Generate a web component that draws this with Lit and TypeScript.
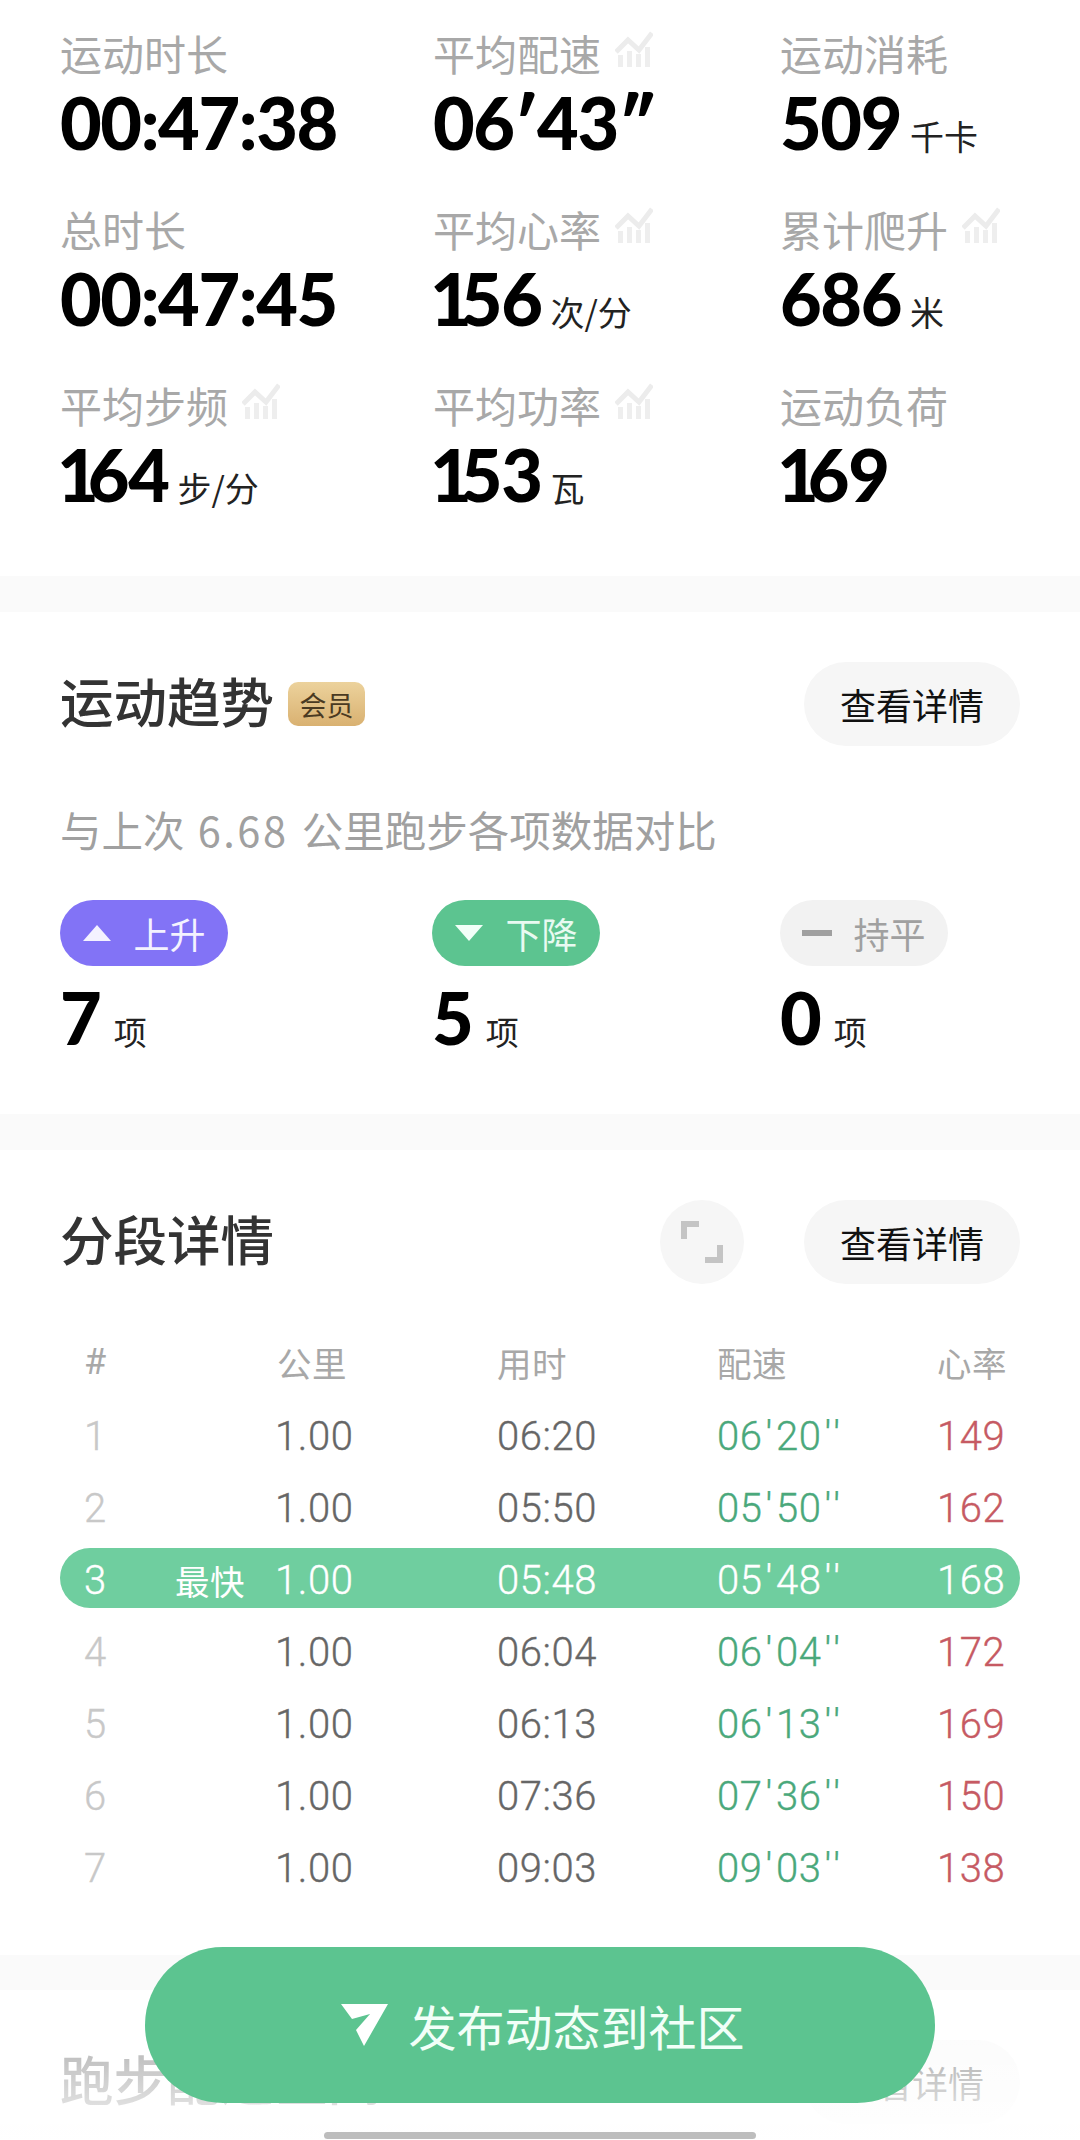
import { LitElement, html, css, svg } from "lit";
import { customElement } from "lit/decorators.js";

const trend = html`<svg class="trend" viewBox="0 0 38 36" aria-hidden="true">
  ${svg`<path d="M1 21 L13 9 L24 19 L37 2" fill="none" stroke="#ececec" stroke-width="5"/>`}
  ${[3, 12, 21, 30].map((x, i) => svg`<rect x="${x}" y="${[24, 20, 23, 16][i]}" width="5" height="${36 - [24, 20, 23, 16][i]}" fill="#eeeeee"/>`)}
</svg>`;

const stats = [
  ["运动时长", "00:47:38", "", false],
  ["平均配速", "06′43″", "", true],
  ["运动消耗", "509", "千卡", false],
  ["总时长", "00:47:45", "", false],
  ["平均心率", "156", "次/分", true],
  ["累计爬升", "686", "米", true],
  ["平均步频", "164", "步/分", true],
  ["平均功率", "153", "瓦", true],
  ["运动负荷", "169", "", false],
] as const;

const rows = [
  ["1", "", "1.00", "06:20", "06'20''", "149"],
  ["2", "", "1.00", "05:50", "05'50''", "162"],
  ["3", "最快", "1.00", "05:48", "05'48''", "168"],
  ["4", "", "1.00", "06:04", "06'04''", "172"],
  ["5", "", "1.00", "06:13", "06'13''", "169"],
  ["6", "", "1.00", "07:36", "07'36''", "150"],
  ["7", "", "1.00", "09:03", "09'03''", "138"],
];

const num = (v: string) =>
  v.startsWith("1")
    ? html`<span class="num narrow"><span class="one">1</span>${v.slice(1)}</span>`
    : html`<span class="num">${v}</span>`;

const pace = (p: string) => {
  const [m, s] = p.split("'");
  return html`${m}<span class="q">'</span>${s}<span class="q2">''</span>`;
};

@customElement("app-root")
export class AppRoot extends LitElement {
  static styles = css`
    :host {
      display: block;
      position: relative;
      width: 1080px;
      height: 2140px;
      overflow: hidden;
      background: #fafafa;
      font-family: "Noto Sans CJK SC", sans-serif;
    }
    .section { background: #fff; padding: 50px 60px 0; }
    .stats {
      display: grid;
      grid-template-columns: 373px 347px 240px;
      row-gap: 37px;
      padding: 23px 60px 62px;
      background: #fff;
      margin-bottom: 36px;
    }
    .label {
      display: flex;
      align-items: center;
      height: 60px;
      font-size: 42px;
      line-height: 60px;
      color: #a8a8a8;
    }
    .trend { width: 38px; height: 36px; margin-left: 14px; margin-top: -8px; flex: none; }
    .value {
      display: flex;
      align-items: baseline;
      height: 80px;
      line-height: 80px;
      margin-top: -1px;
    }
    .num {
      font-family: "Lato", sans-serif;
      font-weight: 900;
      font-size: 72px;
      letter-spacing: -1.4px;
      color: #000;
    }
    .narrow { margin-left: -3px; }
    .one { letter-spacing: -11px; }
    .unit { font-size: 34px; color: #222; margin-left: 9px; line-height: 1; }
    .head { display: flex; align-items: center; height: 84px; }
    .title { font-size: 53.5px; font-weight: 500; color: #333; line-height: 76px; margin-bottom: 8px; }
    .badge {
      display: flex;
      align-items: center;
      justify-content: center;
      width: 77px;
      height: 44px;
      margin-left: 14px;
      border-radius: 10px;
      background: linear-gradient(180deg, #ecd29c, #d9b171);
      color: #4a3a22;
      font-size: 27px;
    }
    .spacer { flex: 1; }
    .more {
      width: 216px;
      height: 84px;
      border-radius: 42px;
      background: #f6f6f6;
      display: flex;
      align-items: center;
      justify-content: center;
      font-size: 36px;
      color: #111;
    }
    .expand {
      width: 84px;
      height: 84px;
      border-radius: 50%;
      background: #f6f6f6;
      margin-right: 60px;
      display: flex;
      align-items: center;
      justify-content: center;
    }
    .expand svg { width: 42px; height: 42px; }
    .sub {
      margin-top: 58px;
      height: 50px;
      line-height: 50px;
      font-size: 41.5px;
      color: #a0a0a0;
      margin-bottom: 7px;
    }
    .subnum { letter-spacing: 2.5px; margin: 0 4px; }
    .trends {
      display: grid;
      grid-template-columns: 372px 348px 240px;
      margin-top: 46px;
      padding-bottom: 60px;
    }
    .pill {
      width: 168px;
      height: 66px;
      border-radius: 33px;
      display: flex;
      align-items: center;
      justify-content: center;
      gap: 21px;
      font-size: 36px;
      color: #f4f2ff;
    }
    .pill svg { width: 30px; height: 18px; flex: none; }
    .up { background: #8273f6; }
    .down { background: #5cc490; color: #e8faf1; }
    .flat { background: #f2f2f2; color: #a0a0a0; }
    .count {
      display: flex;
      align-items: baseline;
      height: 70px;
      line-height: 70px;
      margin-top: 16px;
      margin-bottom: 2px;
    }
    .count .num { font-size: 72px; letter-spacing: 0; }
    .count .unit { font-size: 33px; margin-left: 12px; }
    .table { margin-top: 42px; padding-bottom: 51px; display: flex; flex-direction: column; }
    .row {
      display: grid;
      grid-template-columns: 91px 100px 222px 220px 220px 83px;
      box-sizing: border-box;
      height: 60px;
      margin: 4px 0 8px;
      padding: 5px 0 0 24px;
      border-radius: 30px;
      align-items: center;
      font-family: "Roboto", "Noto Sans CJK SC", sans-serif;
      font-weight: 300;
      -webkit-text-stroke: 0.35px currentColor;
      font-size: 40px;
      line-height: 55px;
      letter-spacing: 0.6px;
      color: #666666;
    }
    .row > span { white-space: nowrap; }
    .idx { color: #c8c8c8; }
    .pace { color: #4aa87b; }
    .hr { color: #c65a63; }
    .q { margin: 0 3px; }
    .q2 { margin-left: 3px; letter-spacing: 4px; }
    .hdr { margin-bottom: 10px; -webkit-text-stroke: 0; }
    .hdr span { font-family: "Noto Sans CJK SC", sans-serif; font-weight: 400; font-size: 34.5px; color: #a8a8a8; }
    .hdr span:nth-child(3) { margin-left: 2px; }
    .hdr span:first-child { font-family: "Roboto", sans-serif; font-size: 36px; }
    .fast { background: #6fce9f; color: #fff; }
    .fast span { color: #fff; }
    .tag { font-family: "Noto Sans CJK SC", sans-serif; font-size: 34.5px; font-weight: 400; color: #f0fff8; -webkit-text-stroke: 0; }
    .gap4 { margin-top: 35px; }
    .fade {
      position: absolute;
      left: 0;
      right: 0;
      top: 1992px;
      height: 148px;
      background: linear-gradient(180deg, rgba(255,255,255,0.5), rgba(255,255,255,0.95));
    }
    .publish {
      position: absolute;
      left: 145px;
      top: 1947px;
      width: 790px;
      height: 156px;
      box-sizing: border-box;
      padding-left: 6px;
      border-radius: 78px;
      background: #5cc490;
      color: #f2fff8;
      font-size: 48px;
      display: flex;
      align-items: center;
      justify-content: center;
      gap: 20px;
    }
    .publish svg { width: 47px; height: 42px; flex: none; }
    .homebar {
      position: absolute;
      left: 324px;
      top: 2132px;
      width: 432px;
      height: 7px;
      border-radius: 4px;
      background: #bdbdbd;
    }
  `;

  render() {
    return html`
      <div class="stats">
        ${stats.map(([l, v, u, t]) => html`<div>
          <div class="label">${l}${t ? trend : ""}</div>
          <div class="value">${num(v)}${u ? html`<span class="unit">${u}</span>` : ""}</div>
        </div>`)}
      </div>

      <div class="section">
        <div class="head">
          <span class="title">运动趋势</span><span class="badge">会员</span>
          <span class="spacer"></span><span class="more">查看详情</span>
        </div>
        <div class="sub">与上次 <span class="subnum">6.68</span> 公里跑步各项数据对比</div>
        <div class="trends">
          <div>
            <div class="pill up"><svg viewBox="0 0 30 18"><path d="M15 1 L29 17 H1 Z" fill="#f4f2ff"/></svg><span>上升</span></div>
            <div class="count"><span class="num">7</span><span class="unit">项</span></div>
          </div>
          <div>
            <div class="pill down"><svg viewBox="0 0 30 18"><path d="M1 1 H29 L15 17 Z" fill="#f2fff8"/></svg><span>下降</span></div>
            <div class="count"><span class="num">5</span><span class="unit">项</span></div>
          </div>
          <div>
            <div class="pill flat"><svg viewBox="0 0 30 18"><rect x="0" y="6" width="30" height="6" fill="#a0a0a0"/></svg><span>持平</span></div>
            <div class="count"><span class="num">0</span><span class="unit">项</span></div>
          </div>
        </div>
      </div>

      <div class="section" style="margin-top:36px">
        <div class="head">
          <span class="title">分段详情</span><span class="spacer"></span>
          <span class="expand"><svg viewBox="0 0 42 42"><path d="M0 18 V0 H18 V6 H6 V18 Z M42 24 V42 H24 V36 H36 V24 Z" fill="#c4c4c4"/></svg></span>
          <span class="more">查看详情</span>
        </div>
        <div class="table">
          <div class="row hdr"><span>#</span><span></span><span>公里</span><span>用时</span><span>配速</span><span>心率</span></div>
          ${rows.map((r) => html`<div class="row ${r[1] ? "fast" : ""}">
            <span class="idx">${r[0]}</span><span class="tag">${r[1]}</span><span>${r[2]}</span><span>${r[3]}</span><span class="pace">${pace(r[4])}</span><span class="hr">${r[5]}</span>
          </div>`)}
        </div>
      </div>

      <div class="section gap4">
        <div class="head">
          <span class="title">跑步配速区间</span><span class="spacer"></span><span class="more">查看详情</span>
        </div>
      </div>

      <div class="fade"></div>
      <div class="publish">
        <svg viewBox="0 0 47 42"><path d="M0 0 H47 L23 42 L15 26 L29 10 L11 15 Z" fill="#fff"/></svg>
        <span>发布动态到社区</span>
      </div>
      <div class="homebar"></div>
    `;
  }
}
